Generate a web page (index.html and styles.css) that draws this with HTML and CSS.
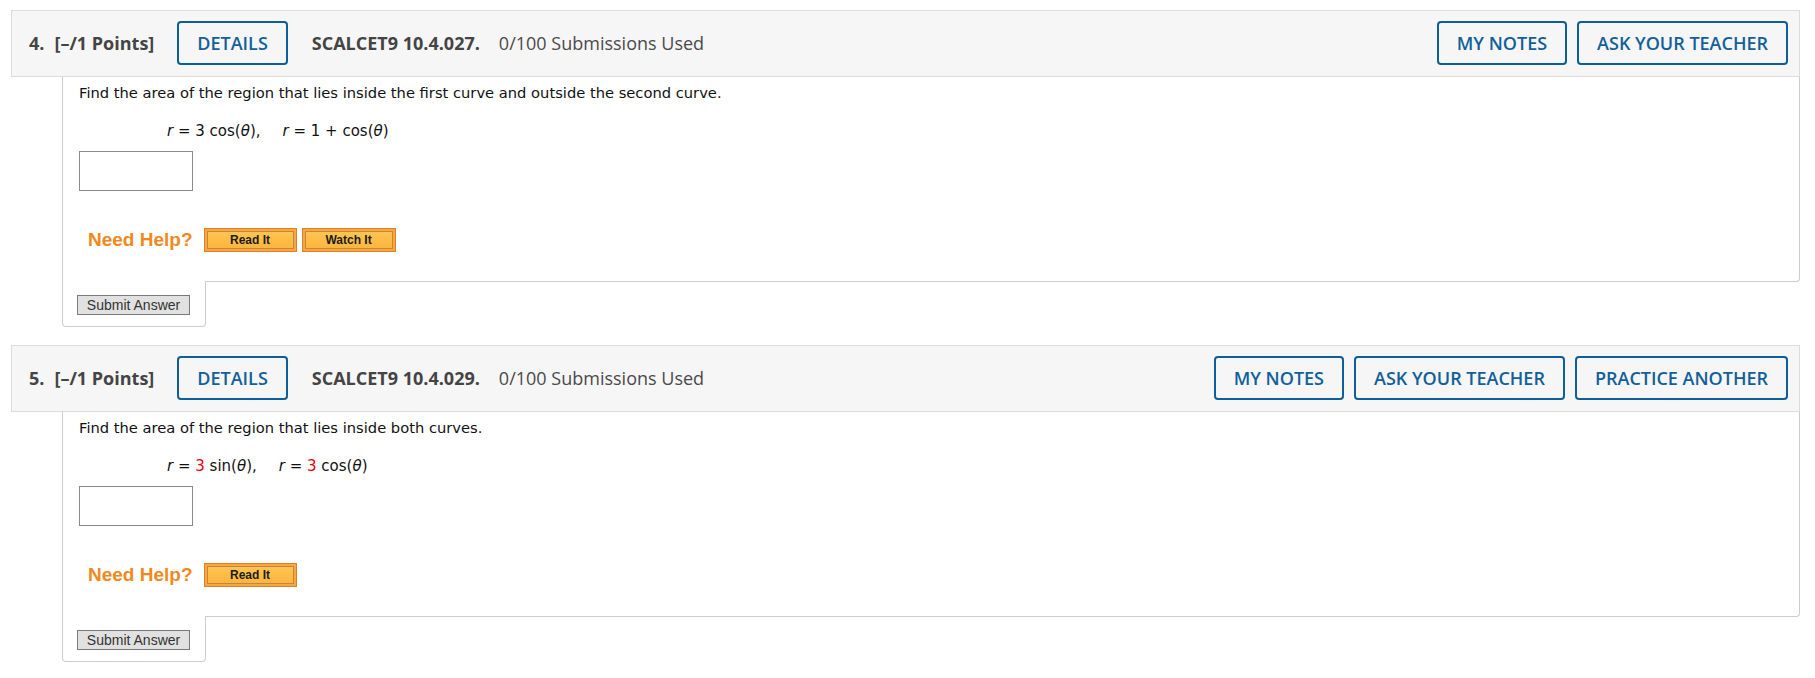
FILE: index.html
```html
<!DOCTYPE html>
<html>
<head>
<meta charset="utf-8">
<link rel="stylesheet" href="styles.css">
</head>
<body>
<div class="page">
  <section class="question">
    <div class="q-header">
      <span class="q-num">4.</span>
      <span class="q-points">[–/1 Points]</span>
      <button class="hbtn">DETAILS</button>
      <span class="q-code">SCALCET9 10.4.027.</span>
      <span class="q-subs">0/100 Submissions Used</span>
      <div class="q-actions">
        <button class="hbtn">MY NOTES</button>
        <button class="hbtn">ASK YOUR TEACHER</button>
      </div>
    </div>
    <div class="q-body">
      <p class="q-text">Find the area of the region that lies inside the first curve and outside the second curve.</p>
      <div class="q-math">
        <span class="eq"><i>r</i> = 3 cos(<i>θ</i>),</span>
        <span class="eq"><i>r</i> = 1 + cos(<i>θ</i>)</span>
      </div>
      <div class="answer-box"></div>
      <div class="help">
        <span class="need-help">Need Help?</span>
        <span class="help-btn read"><span>Read It</span></span>
        <span class="help-btn watch"><span>Watch It</span></span>
      </div>
    </div>
    <div class="q-submit"><button class="submit">Submit Answer</button></div>
  </section>

  <section class="question">
    <div class="q-header">
      <span class="q-num">5.</span>
      <span class="q-points">[–/1 Points]</span>
      <button class="hbtn">DETAILS</button>
      <span class="q-code">SCALCET9 10.4.029.</span>
      <span class="q-subs">0/100 Submissions Used</span>
      <div class="q-actions">
        <button class="hbtn">MY NOTES</button>
        <button class="hbtn">ASK YOUR TEACHER</button>
        <button class="hbtn">PRACTICE ANOTHER</button>
      </div>
    </div>
    <div class="q-body">
      <p class="q-text">Find the area of the region that lies inside both curves.</p>
      <div class="q-math">
        <span class="eq"><i>r</i> = <span class="red">3</span> sin(<i>θ</i>),</span>
        <span class="eq"><i>r</i> = <span class="red">3</span> cos(<i>θ</i>)</span>
      </div>
      <div class="answer-box"></div>
      <div class="help">
        <span class="need-help">Need Help?</span>
        <span class="help-btn read"><span>Read It</span></span>
      </div>
    </div>
    <div class="q-submit"><button class="submit">Submit Answer</button></div>
  </section>
</div>
</body>
</html>
```
FILE: styles.css
```css
html, body {
  margin: 0;
  padding: 0;
  background: #ffffff;
}

.page {
  padding: 10px 15px 0 11px;
}

.question {
  margin-bottom: 18px;
}

.q-header {
  display: flex;
  align-items: center;
  height: 44px;
  padding: 10px 11px 11px 17px;
  background: #f6f6f6;
  border: 1px solid #dcdcdc;
  font-family: "Open Sans", "Liberation Sans", sans-serif;
  font-size: 18px;
  color: #444444;
}

.q-num {
  font-weight: 700;
  margin-right: 10px;
}

.q-points {
  font-weight: 700;
  margin-right: 23px;
}

.q-code {
  font-weight: 700;
  margin-left: 24px;
  margin-right: 19px;
}

.q-subs {
  font-weight: 400;
  color: #4a4a4a;
}

.hbtn {
  height: 44px;
  padding: 0 18px;
  background: #f6f6f6;
  border: 2px solid #0e5f99;
  border-radius: 4px;
  color: #11609a;
  font-family: "Open Sans", "Liberation Sans", sans-serif;
  font-size: 18px;
  font-weight: 600;
  line-height: 1;
  cursor: pointer;
}

.q-actions {
  margin-left: auto;
  display: flex;
  gap: 10px;
}

.q-body {
  margin-left: 51px;
  padding: 7px 16px 29px 16px;
  border: 1px solid #cccccc;
  border-top: none;
  border-bottom-right-radius: 4px;
  font-family: "DejaVu Sans", Verdana, sans-serif;
  font-size: 14.7px;
  color: #111111;
}

.q-text {
  margin: 0;
  line-height: 18px;
}

.q-math {
  display: flex;
  gap: 22px;
  margin: 20px 0 0 88px;
  font-size: 15px;
  line-height: 18px;
}

.q-math i {
  font-style: italic;
}

.red {
  color: #e8000b;
}

.answer-box {
  width: 112px;
  height: 38px;
  margin-top: 11px;
  border: 1px solid #8a8a8a;
  background: #ffffff;
}

.help {
  display: flex;
  align-items: center;
  margin-top: 37px;
  padding-left: 9px;
}

.need-help {
  font-family: "Liberation Sans", Arial, sans-serif;
  font-weight: 700;
  font-size: 19px;
  color: #f0891c;
  margin-right: 11px;
}

.help-btn {
  display: block;
  padding: 2px;
  border: 1px solid #d7822b;
  background: #f8a63d;
  margin-right: 5px;
}

.help-btn.read {
  width: 87px;
}

.help-btn.watch {
  width: 88px;
}

.help-btn span {
  display: block;
  height: 16px;
  line-height: 16px;
  border: 1px solid #c9843a;
  background: linear-gradient(#fec551, #fbb63f);
  font-family: "Liberation Sans", Arial, sans-serif;
  font-weight: 700;
  font-size: 12px;
  color: #1c1c1c;
  text-align: center;
}

.q-submit {
  position: relative;
  width: 128px;
  margin: -1px 0 0 51px;
  padding: 14px 0 11px 14px;
  background: #ffffff;
  border: 1px solid #cccccc;
  border-top: none;
  border-radius: 0 0 4px 4px;
}

.submit {
  display: block;
  width: 113px;
  height: 20px;
  padding: 0;
  background: #e1e1e1;
  border: 1px solid #7a7a7a;
  font-family: "Liberation Sans", Arial, sans-serif;
  font-size: 14px;
  color: #333333;
  line-height: 18px;
}
```
